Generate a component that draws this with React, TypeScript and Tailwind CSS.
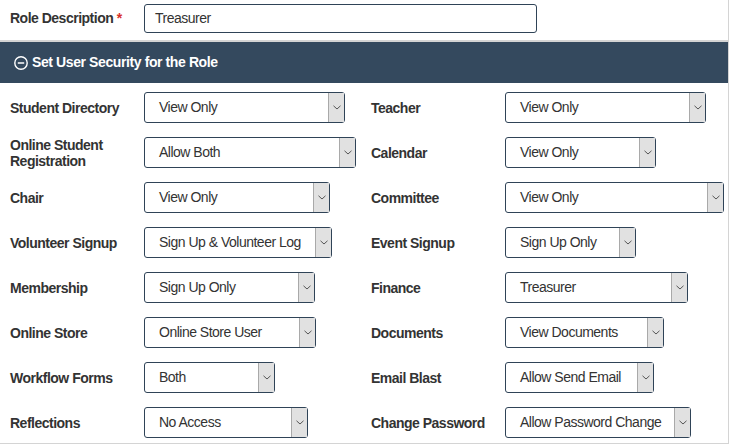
import React from 'react';

type Perm = { label: string; value: string; width: number };

const leftCol: Perm[] = [
  { label: 'Student Directory', value: 'View Only', width: 201 },
  { label: 'Online Student Registration', value: 'Allow Both', width: 212 },
  { label: 'Chair', value: 'View Only', width: 186 },
  { label: 'Volunteer Signup', value: 'Sign Up & Volunteer Log', width: 188 },
  { label: 'Membership', value: 'Sign Up Only', width: 171 },
  { label: 'Online Store', value: 'Online Store User', width: 172 },
  { label: 'Workflow Forms', value: 'Both', width: 131 },
  { label: 'Reflections', value: 'No Access', width: 164 },
];

const rightCol: Perm[] = [
  { label: 'Teacher', value: 'View Only', width: 201 },
  { label: 'Calendar', value: 'View Only', width: 151 },
  { label: 'Committee', value: 'View Only', width: 219 },
  { label: 'Event Signup', value: 'Sign Up Only', width: 131 },
  { label: 'Finance', value: 'Treasurer', width: 183 },
  { label: 'Documents', value: 'View Documents', width: 159 },
  { label: 'Email Blast', value: 'Allow Send Email', width: 149 },
  { label: 'Change Password', value: 'Allow Password Change', width: 186 },
];

const FakeSelect: React.FC<{ value: string; width: number }> = ({ value, width }) => (
  <div
    className="flex h-[31px] items-stretch rounded-[3px] border border-[#2f4357] bg-white"
    style={{ width }}
  >
    <span className="flex flex-1 items-center overflow-hidden whitespace-nowrap pl-[14px] text-[14px] tracking-[-0.5px] text-[#333]">
      {value}
    </span>
    <span className="flex w-[16px] items-center justify-center border-l border-[#a9a9a9] bg-[#e1e1e1]">
      <svg width="8" height="5" viewBox="0 0 8 5" fill="none">
        <path d="M0.5 0.8 L4 4 L7.5 0.8" stroke="#555" strokeWidth="1" />
      </svg>
    </span>
  </div>
);

const PermRow: React.FC<{ perm: Perm }> = ({ perm }) => (
  <div className="flex h-[31px] items-center">
    <div className="w-[134px] pr-2 text-[14px] font-bold leading-[16px] tracking-[-0.5px] text-[#333]">
      {perm.label}
    </div>
    <FakeSelect value={perm.value} width={perm.width} />
  </div>
);

const App: React.FC = () => {
  return (
    <div
      className="w-[729px] border-r border-b border-[#d4d4d4] bg-white"
      style={{ fontFamily: '"Liberation Sans", Arial, sans-serif' }}
    >
      <div className="flex h-[40px] items-center pb-[4px] pl-[10px]">
        <label className="w-[134px] text-[14px] font-bold tracking-[-0.5px] text-[#333]">
          Role Description <span className="text-[#d9302c]">*</span>
        </label>
        <div className="flex h-[29px] w-[393px] items-center rounded-[3px] border border-[#2f4357] pl-[10px] text-[14px] tracking-[-0.5px] text-[#333]">
          Treasurer
        </div>
      </div>

      <div className="border-t-2 border-[#d4d4d4]">
        <div className="flex h-[41px] items-center gap-[4px] bg-[#34495e] pl-[14px] text-[14px] font-bold tracking-[-0.4px] text-white">
          <svg width="14" height="14" viewBox="0 0 14 14" fill="none">
            <circle cx="7" cy="7" r="6.2" stroke="white" strokeWidth="1.4" />
            <line x1="3.8" y1="7" x2="10.2" y2="7" stroke="white" strokeWidth="1.5" />
          </svg>
          <span>Set User Security for the Role</span>
        </div>
      </div>

      <div className="flex pt-[9px] pb-[5px]">
        <div className="flex w-[361px] flex-col gap-[14px] pl-[10px]">
          {leftCol.map((p) => (
            <PermRow key={p.label} perm={p} />
          ))}
        </div>
        <div className="flex flex-col gap-[14px] pl-[10px]">
          {rightCol.map((p) => (
            <PermRow key={p.label} perm={p} />
          ))}
        </div>
      </div>
    </div>
  );
};

export default App;
